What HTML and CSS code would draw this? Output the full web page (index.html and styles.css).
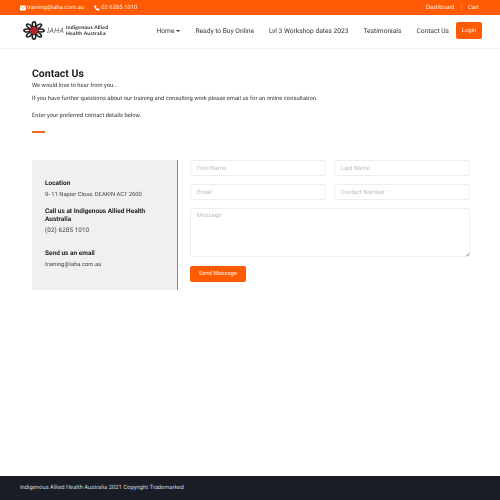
FILE: index.html
```html
<!DOCTYPE html>
<html lang="en">
<head>
<meta charset="utf-8">
<title>Contact Us</title>
<link rel="stylesheet" href="styles.css">
</head>
<body>
<div class="page">
  <div class="topbar">
    <div class="top-left">
      <span class="top-item"><svg class="ic" viewBox="0 0 10 8"><rect width="10" height="8" rx="1" fill="#fff"/><path d="M.5 1.500 5 4.800 9.500 1.500" fill="none" stroke="#ff5b05" stroke-width=".8"/></svg>training@iaha.com.au</span>
      <span class="top-item"><svg class="ic" viewBox="0 0 10 10"><path d="M1 .8 3 .3l1.100 2.500-1.200 1c.6 1.300 1.600 2.300 2.900 2.900l1-1.200 2.500 1.100-.5 2C8.600 9.300 8 9.700 7.500 9.600 3.800 9 1 6.200.4 2.500.3 1.900.5 1.100 1 .8Z" fill="#fff"/></svg>02 6285 1010</span>
    </div>
    <div class="top-right">
      <span>Dashboard</span><span class="sep">|</span><span>Cart</span>
    </div>
  </div>
  <nav class="nav">
    <div class="logo">
      <svg class="flower" viewBox="0 0 24 24" preserveAspectRatio="none">
        <g fill="none" stroke="#1c1c1c" stroke-width="1.800">
          <ellipse cx="12" cy="4.500" rx="1.900" ry="3.500"/>
          <ellipse cx="12" cy="4.500" rx="1.900" ry="3.500" transform="rotate(45 12 12)"/>
          <ellipse cx="12" cy="4.500" rx="1.900" ry="3.500" transform="rotate(90 12 12)"/>
          <ellipse cx="12" cy="4.500" rx="1.900" ry="3.500" transform="rotate(135 12 12)"/>
          <ellipse cx="12" cy="4.500" rx="1.900" ry="3.500" transform="rotate(180 12 12)"/>
          <ellipse cx="12" cy="4.500" rx="1.900" ry="3.500" transform="rotate(225 12 12)"/>
          <ellipse cx="12" cy="4.500" rx="1.900" ry="3.500" transform="rotate(270 12 12)"/>
          <ellipse cx="12" cy="4.500" rx="1.900" ry="3.500" transform="rotate(315 12 12)"/>
        </g>
        <circle cx="12" cy="12" r="4.500" fill="#b3242a"/>
      </svg>
      <span class="logo-mark">IAHA</span>
      <span class="logo-text">Indigenous Allied<br>Health Australia</span>
    </div>
    <div class="links">
      <span class="link">Home<i class="caret"></i></span>
      <span class="link">Ready to Buy Online</span>
      <span class="link">Lvl 3 Workshop dates 2023</span>
      <span class="link">Testimonials</span>
      <span class="link">Contact Us</span>
      <span class="login">Login</span>
    </div>
  </nav>
  <main class="main">
    <h1>Contact Us</h1>
    <p class="intro-1">We would love to hear from you...</p>
    <p class="intro-2">If you have further questions about our training and consulting work please email us for an online consultation.</p>
    <p class="intro-3">Enter your preferred contact details below.</p>
    <div class="rule"></div>
    <section class="contact">
      <aside class="info">
        <h2>Location</h2>
        <p class="small addr">9- 11 Napier Close, DEAKIN ACT 2600</p>
        <h2>Call us at Indigenous Allied Health Australia</h2>
        <p class="phone">(02) 6285 1010</p>
        <h2>Send us an email</h2>
        <p class="small mail">training@iaha.com.au</p>
      </aside>
      <form class="form">
        <div class="row">
          <input class="field" placeholder="First Name">
          <input class="field" placeholder="Last Name">
        </div>
        <div class="row">
          <input class="field" placeholder="Email">
          <input class="field" placeholder="Contact Number">
        </div>
        <textarea class="field area" placeholder="Message"></textarea>
        <button class="send" type="button">Send Message</button>
      </form>
    </section>
  </main>
  <footer class="footer">Indigenous Allied Health Australia 2021 Copyright Trademarked</footer>
</div>
</body>
</html>
```
FILE: styles.css
```css
* { box-sizing: border-box; }
html, body { margin: 0; padding: 0; }
body { font-family: Roboto, "Liberation Sans", sans-serif; color: #212529; background: #fff; text-rendering: geometricPrecision; }
.page { width: 500px; height: 500px; display: flex; flex-direction: column; overflow: hidden; filter: blur(.3px); }

.topbar { height: 15px; flex: none; background: #ff5b05; color: #ffe6d8; font-size: 5.900px; display: flex; justify-content: space-between; align-items: center; padding: 0 21px 0 20px; }
.top-left { display: flex; gap: 10px; }
.top-item { display: flex; align-items: center; gap: 1px; }
.ic { width: 6px; height: 6px; }
.top-right { display: flex; gap: 6px; }
.sep { opacity: .6; }

.nav { height: 34px; flex: none; border-bottom: 1px solid #f2f2f2; display: flex; align-items: center; justify-content: space-between; padding: 0 18px 2px 23px; }
.logo { display: flex; align-items: center; }
.flower { width: 22px; height: 19px; flex: none; }
.logo-mark { font-family: "Noto Sans", sans-serif; font-style: italic; font-weight: 300; font-size: 7.500px; letter-spacing: .3px; color: #222; margin-left: 2px; width: 19px; flex: none; white-space: nowrap; }
.logo-text { font-family: Lato, sans-serif; font-size: 5px; line-height: 6px; font-weight: 700; letter-spacing: .25px; color: #222; white-space: nowrap; }
.links { display: flex; align-items: center; gap: 15px; font-size: 6.650px; color: #333; }
.caret { display: inline-block; margin-left: 2px; vertical-align: 1px; border-top: 2px solid #333; border-left: 2px solid transparent; border-right: 2px solid transparent; }
.login { width: 26px; height: 17px; margin-left: -8px; background: #ff5b05; color: #ffeee5; border-radius: 2px; font-size: 5.900px; display: flex; align-items: center; justify-content: center; }

.main { flex: 1; padding: 18px 30px 0 32px; }
h1 { margin: 0; font-size: 10.500px; line-height: 13px; font-weight: 700; color: #1c1f23; }
.main > p { margin: 0; font-size: 5.840px; line-height: 8px; color: #333; white-space: nowrap; }
.main > .intro-1 { padding-top: 2px; height: 10px; }
.main > .intro-2 { padding-top: 5px; height: 13px; }
.main > .intro-3 { padding-top: 9px; height: 17px; }
.rule { width: 13px; height: 2px; background: #f0671f; margin-top: 11px; }

.contact { display: flex; margin-top: 27px; gap: 12px; }
.info { width: 146px; height: 130px; background: #f0f0f0; border-right: 1px solid #8a8a8a; padding: 19px 10px 0 13px; }
h2 { margin: 0; font-size: 6.500px; line-height: 8px; font-weight: 700; color: #222; }
.info p { margin: 0; color: #444; }
.small { font-size: 5.800px; line-height: 8px; }
.addr { padding: 4px 0 8px; }
.phone { font-size: 6.300px; line-height: 8px; padding: 3px 0 15px; letter-spacing: .1px; }
.mail { padding-top: 4px; }

.form { width: 280px; display: flex; flex-direction: column; gap: 8px; }
.row { display: flex; justify-content: space-between; }
.field { width: 136px; height: 16px; border: 1px solid #eceef0; border-radius: 2px; padding: 0 6px; font-family: inherit; font-size: 6px; background: #fff; outline: none; display: block; text-rendering: geometricPrecision; }
.field::placeholder { color: #b8bcc0; opacity: 1; }
.area { width: 280px; height: 49px; padding: 3px 6px; resize: vertical; }
.area::-webkit-resizer { background: linear-gradient(135deg, transparent 55%, #c4c4c4 55%) no-repeat right bottom / 4px 4px; }
.send { width: 56px; height: 16px; margin-top: 1px; border: 0; border-radius: 2px; background: #ff5b05; color: #ffeee5; font-family: inherit; font-size: 5.800px; font-weight: 400; padding: 0; text-rendering: geometricPrecision; }

.footer { height: 24px; flex: none; background: #1a1d25; color: #d5d6d8; font-size: 5.840px; display: flex; align-items: center; padding-left: 20px; }
```
